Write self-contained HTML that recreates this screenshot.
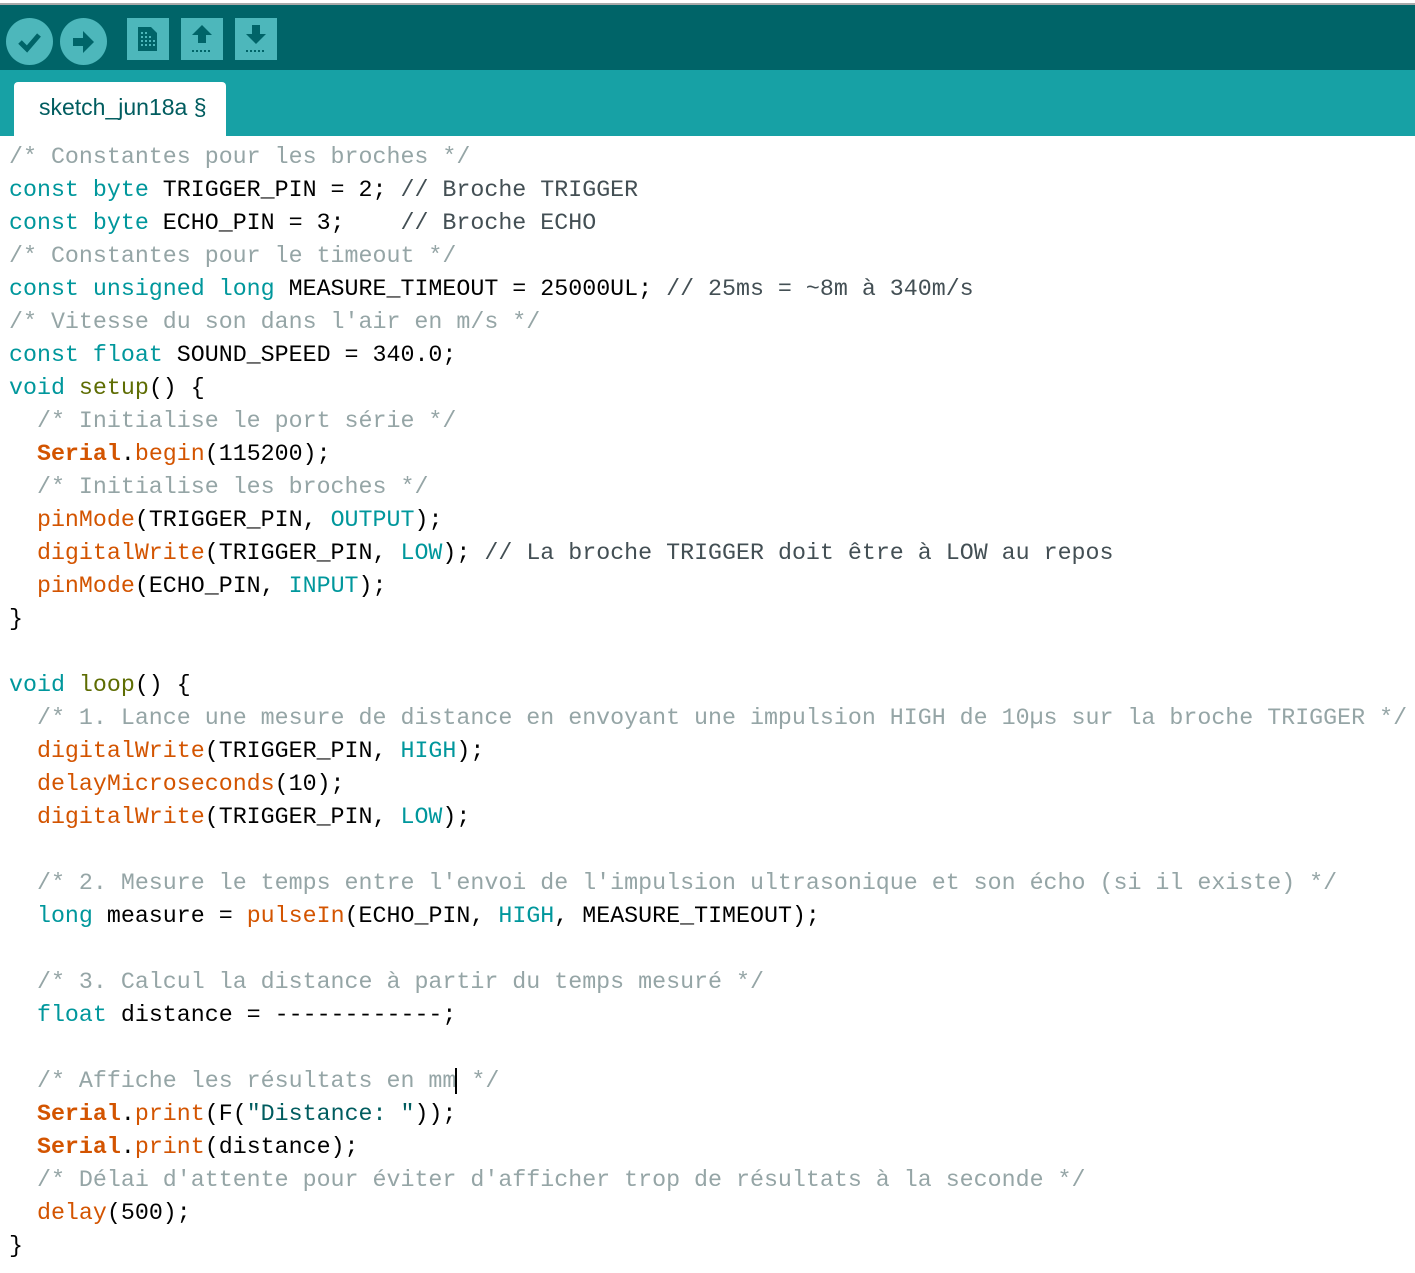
<!DOCTYPE html>
<html><head><meta charset="utf-8"><style>
body{margin:0;width:1415px;height:1273px;overflow:hidden;background:#fff;position:relative;font-family:"Liberation Sans",sans-serif}
#top{position:absolute;left:0;top:0;width:1415px;height:5px;background:#fff;border-bottom:2px solid #aaa;box-sizing:border-box}
#tb{position:absolute;left:0;top:5px;width:1415px;height:65px;background:#006468}
#tabs{position:absolute;left:0;top:70px;width:1415px;height:66px;background:#17a1a5}
#tab{position:absolute;left:14px;top:82px;width:212px;height:60px;background:#fff;border-radius:4px 4px 0 0;color:#005c5f;font-size:23px;line-height:50px;padding-left:25px;box-sizing:border-box}
.b{position:absolute;background:#4db7bb}
pre{position:absolute;left:9px;top:141px;margin:0;font-family:"Liberation Mono",monospace;font-size:23.3px;line-height:33px;color:#000}
.c{color:#95a5a6}.l{color:#434f54}.k{color:#00979c}.f{color:#d35400}.s{color:#d35400;font-weight:bold}.t{color:#005c5f}.o{color:#5e6d03}
</style></head><body>
<div id="top"></div>
<div id="tb">
<div class="b" style="left:6px;top:13px;width:47px;height:47px;border-radius:50%"></div>
<svg style="position:absolute;left:6px;top:13px" width="47" height="47"><path d="M14 24 L21 31 L33 17" stroke="#006468" stroke-width="5" fill="none"/></svg>
<div class="b" style="left:60px;top:13px;width:47px;height:47px;border-radius:50%"></div>
<svg style="position:absolute;left:60px;top:13px" width="47" height="47"><path d="M13 20h10v-7l11 11-11 11v-7h-10z" fill="#006468"/></svg>
<div class="b" style="left:127px;top:13px;width:42px;height:42px"></div>
<svg style="position:absolute;left:127px;top:13px" width="42" height="42"><path d="M11 9h13l6 6v18h-19z" fill="#006468"/><g fill="#4db7bb"><rect x="14" y="14" width="2" height="2"/><rect x="18" y="14" width="2" height="2"/><rect x="14" y="18" width="2" height="2"/><rect x="18" y="18" width="2" height="2"/><rect x="22" y="18" width="2" height="2"/><rect x="14" y="22" width="2" height="2"/><rect x="18" y="22" width="2" height="2"/><rect x="22" y="22" width="2" height="2"/><rect x="26" y="22" width="2" height="2"/><rect x="14" y="26" width="2" height="2"/><rect x="18" y="26" width="2" height="2"/><rect x="22" y="26" width="2" height="2"/><rect x="26" y="26" width="2" height="2"/></g></svg>
<div class="b" style="left:181px;top:13px;width:42px;height:42px"></div>
<svg style="position:absolute;left:181px;top:13px" width="42" height="42"><path d="M21 7l-10 10h6v8h8v-8h6z" fill="#006468"/><path d="M11 33h20" stroke="#006468" stroke-width="2" stroke-dasharray="2 2"/></svg>
<div class="b" style="left:235px;top:13px;width:42px;height:42px"></div>
<svg style="position:absolute;left:235px;top:13px" width="42" height="42"><path d="M17 7h8v9h6l-10 10-10-10h6z" fill="#006468"/><path d="M11 33h20" stroke="#006468" stroke-width="2" stroke-dasharray="2 2"/></svg>
</div>
<div id="tabs"></div>
<div id="tab">sketch_jun18a §</div>
<pre><span class="c">/* Constantes pour les broches */</span>
<span class="k">const</span> <span class="k">byte</span> TRIGGER_PIN = 2; <span class="l">// Broche TRIGGER</span>
<span class="k">const</span> <span class="k">byte</span> ECHO_PIN = 3;    <span class="l">// Broche ECHO</span>
<span class="c">/* Constantes pour le timeout */</span>
<span class="k">const</span> <span class="k">unsigned</span> <span class="k">long</span> MEASURE_TIMEOUT = 25000UL; <span class="l">// 25ms = ~8m à 340m/s</span>
<span class="c">/* Vitesse du son dans l'air en m/s */</span>
<span class="k">const</span> <span class="k">float</span> SOUND_SPEED = 340.0;
<span class="k">void</span> <span class="o">setup</span>() {
  <span class="c">/* Initialise le port série */</span>
  <span class="s">Serial</span>.<span class="f">begin</span>(115200);
  <span class="c">/* Initialise les broches */</span>
  <span class="f">pinMode</span>(TRIGGER_PIN, <span class="k">OUTPUT</span>);
  <span class="f">digitalWrite</span>(TRIGGER_PIN, <span class="k">LOW</span>); <span class="l">// La broche TRIGGER doit être à LOW au repos</span>
  <span class="f">pinMode</span>(ECHO_PIN, <span class="k">INPUT</span>);
}

<span class="k">void</span> <span class="o">loop</span>() {
  <span class="c">/* 1. Lance une mesure de distance en envoyant une impulsion HIGH de 10µs sur la broche TRIGGER */</span>
  <span class="f">digitalWrite</span>(TRIGGER_PIN, <span class="k">HIGH</span>);
  <span class="f">delayMicroseconds</span>(10);
  <span class="f">digitalWrite</span>(TRIGGER_PIN, <span class="k">LOW</span>);

  <span class="c">/* 2. Mesure le temps entre l'envoi de l'impulsion ultrasonique et son écho (si il existe) */</span>
  <span class="k">long</span> measure = <span class="f">pulseIn</span>(ECHO_PIN, <span class="k">HIGH</span>, MEASURE_TIMEOUT);

  <span class="c">/* 3. Calcul la distance à partir du temps mesuré */</span>
  <span class="k">float</span> distance = ------------;

  <span class="c">/* Affiche les résultats en mm<span style="border-left:2px solid #000;margin-left:-1px"></span> */</span>
  <span class="s">Serial</span>.<span class="f">print</span>(F(<span class="t">"Distance: "</span>));
  <span class="s">Serial</span>.<span class="f">print</span>(distance);
  <span class="c">/* Délai d'attente pour éviter d'afficher trop de résultats à la seconde */</span>
  <span class="f">delay</span>(500);
}</pre>
</body></html>
